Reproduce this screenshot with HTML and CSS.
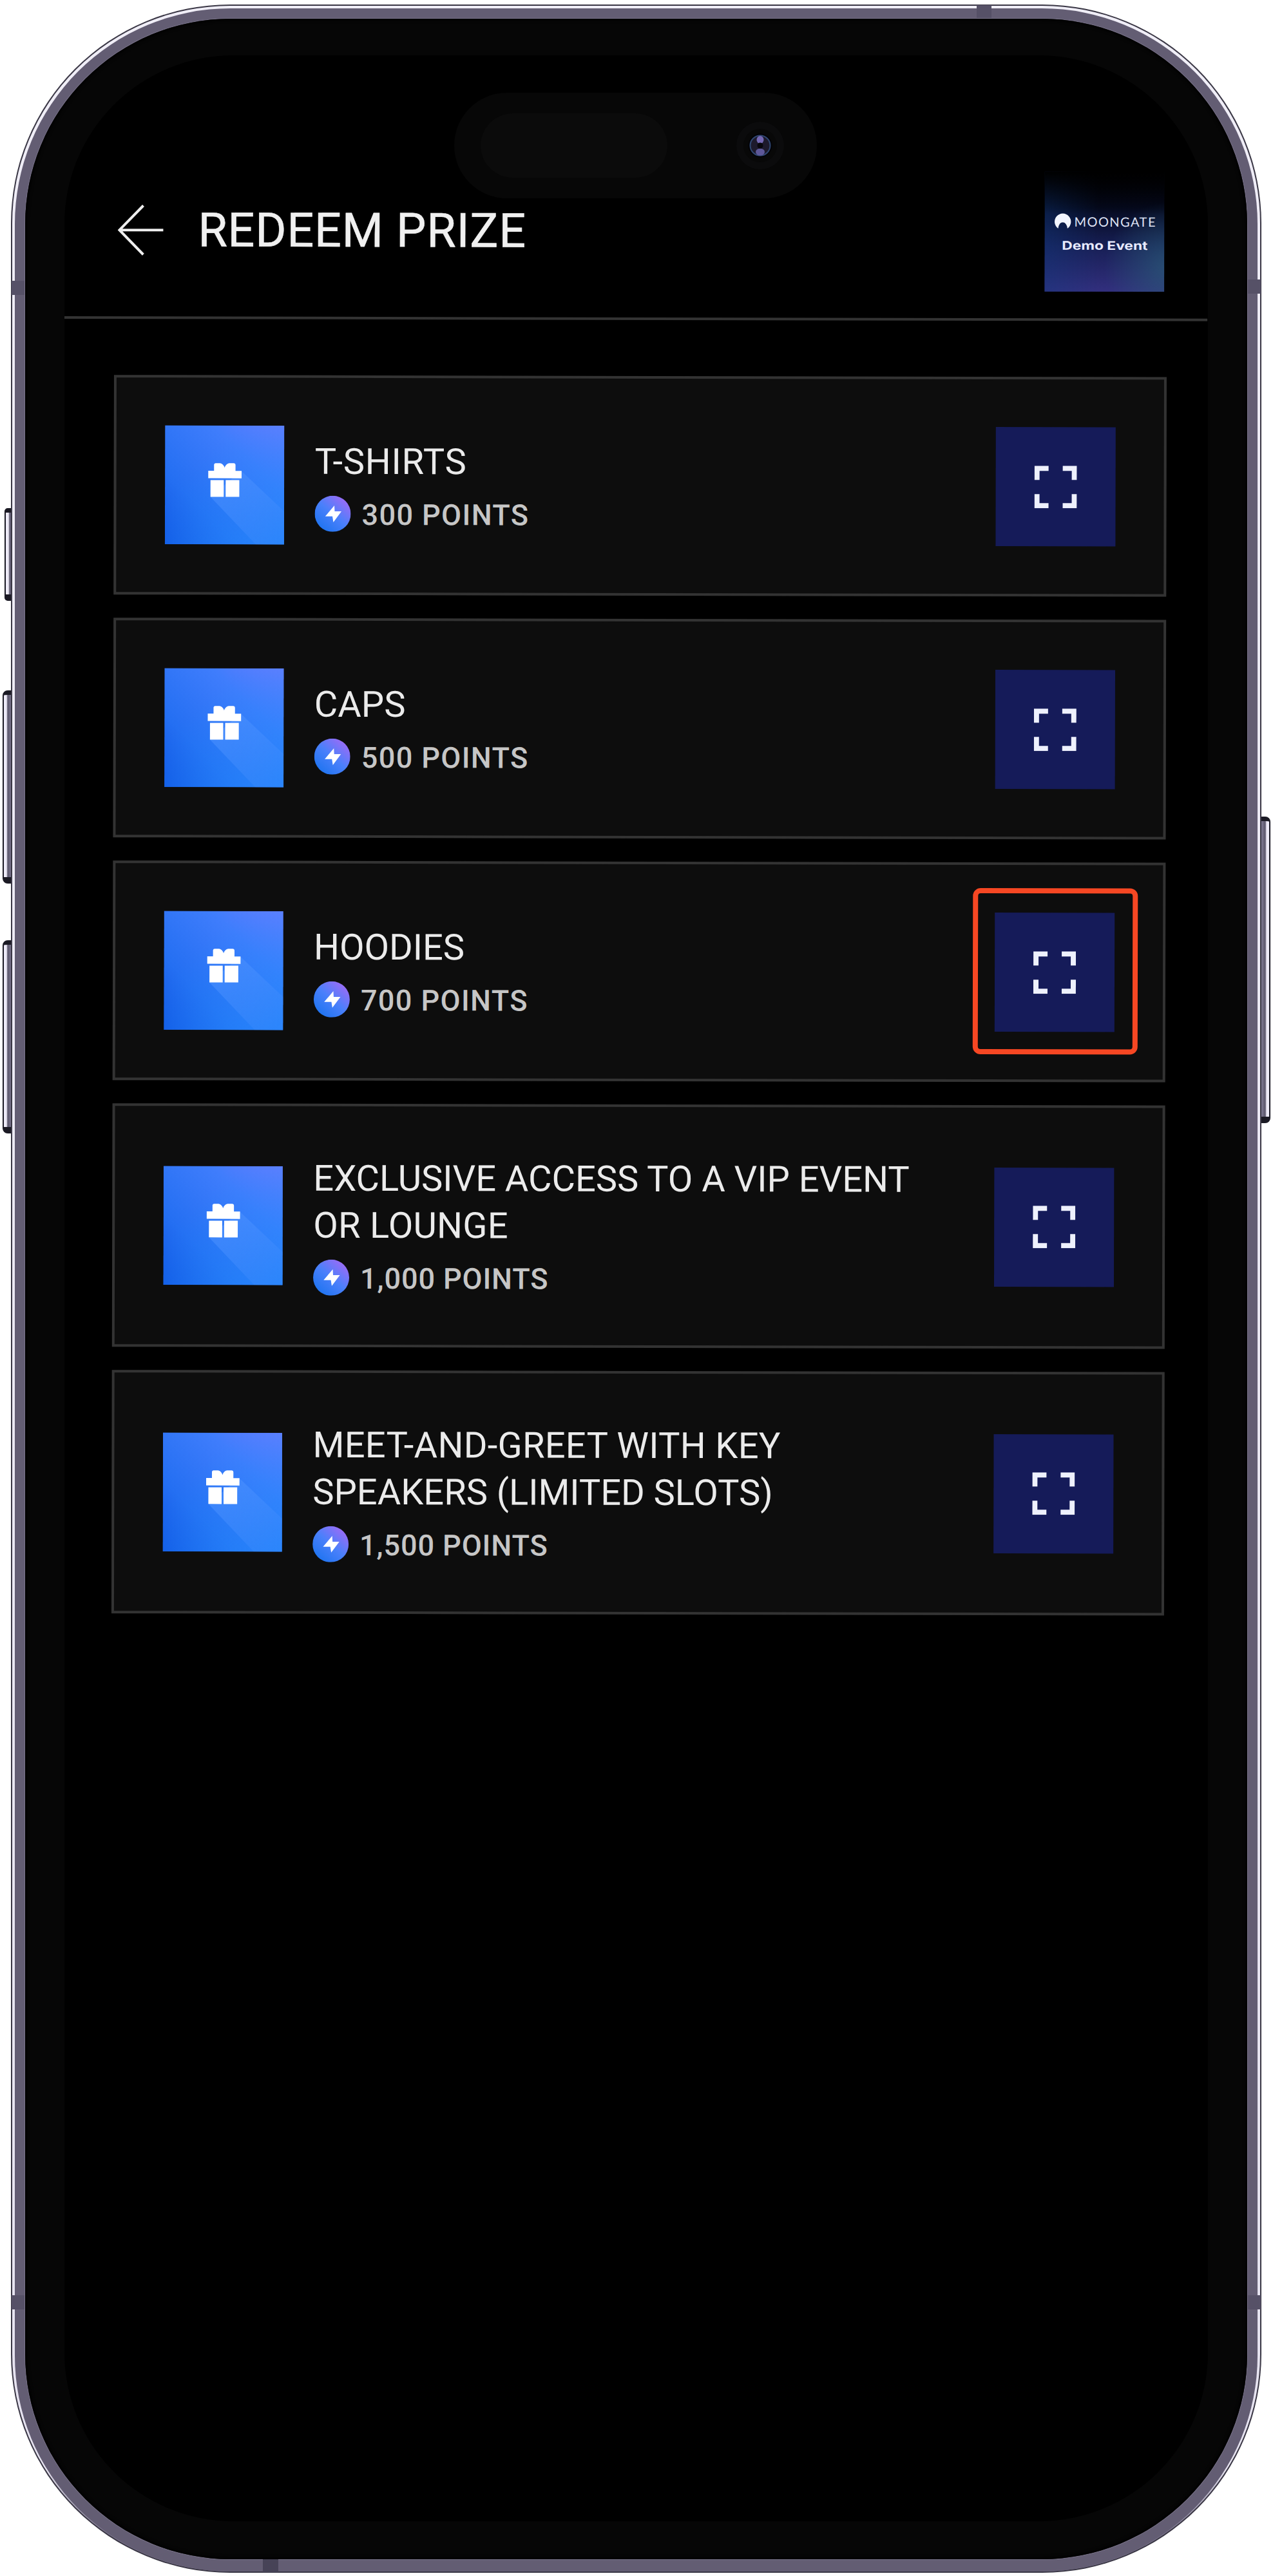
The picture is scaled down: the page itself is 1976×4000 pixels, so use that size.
FILE: index.html
```html
<!DOCTYPE html>
<html lang="en">
<head>
<meta charset="utf-8">
<title>Redeem Prize</title>
<link rel="stylesheet" href="styles.css">
</head>
<body>
<svg class="defs" width="0" height="0" aria-hidden="true">
  <defs>
    <linearGradient id="tile-base" x1="0" y1="1" x2="1" y2="0">
      <stop offset="0" stop-color="#0f55e2"/>
      <stop offset=".3" stop-color="#246ff2"/>
      <stop offset=".7" stop-color="#3f7dfc"/>
      <stop offset="1" stop-color="#6a7dff"/>
    </linearGradient>
    <linearGradient id="tile-glow" x1=".3" y1=".3" x2="1" y2="1">
      <stop offset="0" stop-color="#2488fc" stop-opacity="0"/>
      <stop offset="1" stop-color="#2488fc" stop-opacity=".8"/>
    </linearGradient>
    <linearGradient id="gift-shadow" x1=".2" y1=".2" x2="1" y2="1">
      <stop offset="0" stop-color="#4d92ff" stop-opacity=".55"/>
      <stop offset="1" stop-color="#4d92ff" stop-opacity=".1"/>
    </linearGradient>
    <linearGradient id="coin" x1=".15" y1=".9" x2=".85" y2=".1">
      <stop offset="0" stop-color="#1f74f0"/>
      <stop offset=".5" stop-color="#4a80fb"/>
      <stop offset="1" stop-color="#9a6cf6"/>
    </linearGradient>
    <symbol id="gift" viewBox="0 0 186 186">
      <rect width="186" height="186" fill="url(#tile-base)"/>
      <rect width="186" height="186" fill="url(#tile-glow)"/>
      <path d="M119 71 186 134V186H142L71 111.500z" fill="url(#gift-shadow)"/>
      <path d="M67.500 71H76.500V61Q77 59 79 59H86Q91 60 93 66Q95 60 100 59H107Q110 59 110 62V71H119.500V82.500H67.500z" fill="#fff"/>
      <path d="M71 85.500H91.700V111.500H71zM94.700 85.500H116V111.500H94.700z" fill="#fff"/>
    </symbol>
    <symbol id="bolt" viewBox="0 0 56 56">
      <circle cx="28" cy="28" r="28" fill="url(#coin)"/>
      <path d="M30.500 15 31 24H41.500L29 41 27.500 32H16.300z" fill="#fff"/>
    </symbol>
    <symbol id="scan" viewBox="0 0 66 66">
      <path d="M4 22V4H22M44 4H62V22M62 44V62H44M22 62H4V44" fill="none" stroke="#eef1fd" stroke-width="8"/>
    </symbol>
    <linearGradient id="event-sky" x1="0" y1="0" x2="0" y2="1">
      <stop offset="0" stop-color="#01020a"/>
      <stop offset=".3" stop-color="#050a1f"/>
      <stop offset=".62" stop-color="#171f55"/>
      <stop offset="1" stop-color="#322f7e"/>
    </linearGradient>
    <linearGradient id="event-left" x1="0" y1="0" x2="1" y2="0">
      <stop offset="0" stop-color="#103a80" stop-opacity=".4"/>
      <stop offset=".45" stop-color="#103a80" stop-opacity="0"/>
    </linearGradient>
    <radialGradient id="event-teal" cx="1.050" cy=".8" r=".55">
      <stop offset="0" stop-color="#2a6078" stop-opacity=".7"/>
      <stop offset="1" stop-color="#2a6078" stop-opacity="0"/>
    </radialGradient>
    <linearGradient id="event-fade" x1="0" y1="0" x2="0" y2="1">
      <stop offset="0" stop-color="#000" stop-opacity="1"/>
      <stop offset=".35" stop-color="#000" stop-opacity="0"/>
    </linearGradient>
  </defs>
</svg>

<div class="phone">
  <span class="key key-action"></span>
  <span class="key key-up"></span>
  <span class="key key-down"></span>
  <span class="key key-power"></span>

  <div class="edge"><div class="shine"><div class="metal"><div class="bezel">
    <div class="screen">
      <div class="app">
        <header class="header">
          <svg class="back" viewBox="0 0 72 80"><path d="M40 2 3 40 40 78M3 40H71" fill="none" stroke="#eee" stroke-width="4"/></svg>
          <h1 class="title">REDEEM PRIZE</h1>
          <svg class="event" viewBox="0 0 186 186">
            <rect width="186" height="186" fill="url(#event-sky)"/>
            <rect width="186" height="186" fill="url(#event-left)"/>
            <rect width="186" height="186" fill="url(#event-teal)"/>
            <rect width="186" height="186" fill="url(#event-fade)"/>
            <path d="M21 88A12.700 12.700 0 1 1 35.500 88Q34 78.500 28.200 78.500Q22.500 78.500 21 88z" fill="#f3f6ff"/>
            <text class="event-brand" x="46" y="85" textLength="126">MOONGATE</text>
            <text class="event-name" x="27" y="121" textLength="133" lengthAdjust="spacingAndGlyphs">Demo Event</text>
          </svg>
        </header>

        <main class="prizes">
          <article class="prize">
            <svg class="thumb"><use href="#gift"/></svg>
            <div class="info">
              <h2 class="name wide">T-SHIRTS</h2>
              <p class="points"><svg class="coin"><use href="#bolt"/></svg><span>300 POINTS</span></p>
            </div>
            <button class="scan"><svg class="scan-icon"><use href="#scan"/></svg></button>
          </article>
          <article class="prize">
            <svg class="thumb"><use href="#gift"/></svg>
            <div class="info">
              <h2 class="name">CAPS</h2>
              <p class="points"><svg class="coin"><use href="#bolt"/></svg><span>500 POINTS</span></p>
            </div>
            <button class="scan"><svg class="scan-icon"><use href="#scan"/></svg></button>
          </article>
          <article class="prize">
            <svg class="thumb"><use href="#gift"/></svg>
            <div class="info">
              <h2 class="name">HOODIES</h2>
              <p class="points"><svg class="coin"><use href="#bolt"/></svg><span>700 POINTS</span></p>
            </div>
            <button class="scan highlighted"><svg class="scan-icon"><use href="#scan"/></svg></button>
          </article>
          <article class="prize tall">
            <svg class="thumb"><use href="#gift"/></svg>
            <div class="info">
              <h2 class="name">EXCLUSIVE ACCESS TO A VIP EVENT<br><span class="mid">OR LOUNGE</span></h2>
              <p class="points long"><svg class="coin"><use href="#bolt"/></svg><span>1,000 POINTS</span></p>
            </div>
            <button class="scan"><svg class="scan-icon"><use href="#scan"/></svg></button>
          </article>
          <article class="prize tall">
            <svg class="thumb"><use href="#gift"/></svg>
            <div class="info">
              <h2 class="name"><span class="mid">MEET-AND-GREET WITH KEY</span><br>SPEAKERS (LIMITED SLOTS)</h2>
              <p class="points long"><svg class="coin"><use href="#bolt"/></svg><span>1,500 POINTS</span></p>
            </div>
            <button class="scan"><svg class="scan-icon"><use href="#scan"/></svg></button>
          </article>
        </main>
      </div>

      <div class="island">
        <div class="speaker"></div>
        <svg class="camera" viewBox="0 0 76 76">
          <circle cx="38" cy="38" r="37" fill="#0b0b0c"/>
          <circle cx="38" cy="38" r="26" fill="#080808"/>
          <circle cx="38" cy="38" r="18.500" fill="#020206"/>
          <circle cx="38" cy="38" r="15.500" fill="#1d1a2c" stroke="#2f4670" stroke-width="2"/>
          <ellipse cx="38" cy="29" rx="5.500" ry="6" fill="#7468b4"/>
          <ellipse cx="38" cy="48" rx="7" ry="5.500" fill="#5d5799"/>
          <circle cx="38" cy="38" r="4.500" fill="#08070d"/>
        </svg>
      </div>
    </div>
  </div></div></div></div>

  <span class="band band-top"></span>
  <span class="band band-left"></span>
  <span class="band band-right"></span>
  <span class="band band-left low"></span>
  <span class="band band-right low"></span>
  <span class="band band-bottom"></span>
</div>
</body>
</html>
```
FILE: styles.css
```css
* { box-sizing: border-box; }

body {
  margin: 0;
  background: #fff;
  font-family: Roboto, "Liberation Sans", sans-serif;
}

h1, h2, p { margin: 0; font-weight: 400; }
svg { display: block; }
.defs { position: absolute; }

/* Phone frame, from the outer edge inwards */
.phone {
  position: relative;
  width: 1941px;
  height: 3988px;
  margin: 7px 0 0 17px;
}
.edge {
  position: relative;
  height: 100%;
  padding: 2px;
  border-radius: 340px;
  background: #3a3745;
}
.shine {
  height: 100%;
  padding: 4px 4px 0;
  border-radius: 338px;
  background: linear-gradient(#f0eef7 0, #e6e3f0 96%, #7a748c 98.500%);
}
.metal {
  height: 100%;
  padding: 16px 16px 19px;
  border-radius: 335px;
  background: #635d73;
}
.bezel {
  height: 100%;
  padding: 57px 61px 59px;
  border-radius: 319px;
  background: #060606;
  box-shadow: 0 0 0 1px #7b758c, inset 0 0 5px 2px #000;
}
.screen {
  position: relative;
  height: 100%;
  overflow: hidden;
  border-radius: 262px;
  background: #000;
}

.key {
  position: absolute;
  border: 2px solid #1b1a24;
  border-width: 7px 2px 10px;
  background: linear-gradient(90deg, #eeebf8 0 4px, #5b566b 6px, #85809a);
}
.key-action { left: -10px; top: 782px; width: 14px; height: 144px; border-radius: 5px 0 0 5px; }
.key-up { left: -13px; top: 1065px; width: 17px; height: 300px; border-radius: 8px 0 0 8px; }
.key-down { left: -13px; top: 1453px; width: 17px; height: 300px; border-radius: 8px 0 0 8px; }
.key-power {
  left: 1938px; top: 1261px; width: 17px; height: 476px;
  border-radius: 0 8px 8px 0;
  background: linear-gradient(270deg, #eeebf8 0 4px, #5b566b 6px, #85809a);
}

.band { position: absolute; background: #565167; }
.band-top { left: 1499px; top: 1px; width: 23px; height: 20px; }
.band-left { left: 1px; top: 429px; width: 20px; height: 22px; }
.band-right { right: 1px; top: 427px; width: 20px; height: 22px; }
.band.low { top: 3557px; }
.band-bottom { left: 391px; bottom: 1px; width: 24px; height: 20px; background: #474357; }

/* The display sits very slightly askew in its frame */
.app {
  transform: rotate(.12deg);
  transform-origin: 0 0;
}

.header {
  display: flex;
  align-items: center;
  height: 409px;
  padding: 177px 67px 41px 83px;
  border-bottom: 4px solid #333;
}
.back { width: 72px; height: 80px; }
.title {
  margin-left: 53px;
  font-size: 73.500px;
  line-height: 90px;
  letter-spacing: .900px;
  color: #f0f0f0;
  -webkit-text-stroke: .600px #f0f0f0;
}
.event { width: 186px; height: 187px; margin-left: auto; }
.event-brand { font: 400 20px Lato, sans-serif; fill: #dfe3f5; }
.event-name { font: 700 18.500px Inter, sans-serif; fill: #e8ebff; }

.prizes {
  display: flex;
  flex-direction: column;
  gap: 36px;
  margin: 87px 63px 0 78px;
}
.prize {
  display: flex;
  align-items: center;
  height: 341px;
  padding: 0 75px;
  border: 4px solid #333;
  background: #0d0d0d;
}
.prize.tall { height: 378px; }
.thumb { flex: none; width: 186px; height: 185px; }
.info { flex: 1; margin-left: 47px; }
.name {
  font-size: 56px;
  line-height: 73px;
  white-space: nowrap;
  color: #ebebeb;
}
.wide { letter-spacing: .800px; }
.mid { letter-spacing: .300px; }
.points {
  display: flex;
  align-items: center;
  gap: 17px;
  margin-top: 16px;
  font-size: 45px;
  font-weight: 500;
  line-height: 56px;
  letter-spacing: 1.400px;
  color: #c6c6c6;
}
.points span { position: relative; top: 2px; }
.points.long { letter-spacing: .900px; }
.coin { flex: none; width: 56px; height: 56px; }

.scan {
  position: relative;
  flex: none;
  display: grid;
  place-items: center;
  width: 186px;
  height: 185px;
  padding: 0;
  border: 0;
  background: #151b59;
}
.scan-icon { width: 66px; height: 66px; }
.highlighted::after {
  content: "";
  position: absolute;
  inset: -38px -36px -35px -34px;
  border: 8px solid #f64723;
  border-radius: 12px;
}

.island {
  position: absolute;
  left: 605px;
  top: 58px;
  display: flex;
  align-items: center;
  justify-content: space-between;
  width: 563px;
  height: 164px;
  padding: 0 50px 0 41px;
  border-radius: 82px;
  background: #070707;
}
.speaker { width: 290px; height: 100px; border-radius: 50px; background: #0b0b0b; }
.camera { width: 76px; height: 76px; }
```
